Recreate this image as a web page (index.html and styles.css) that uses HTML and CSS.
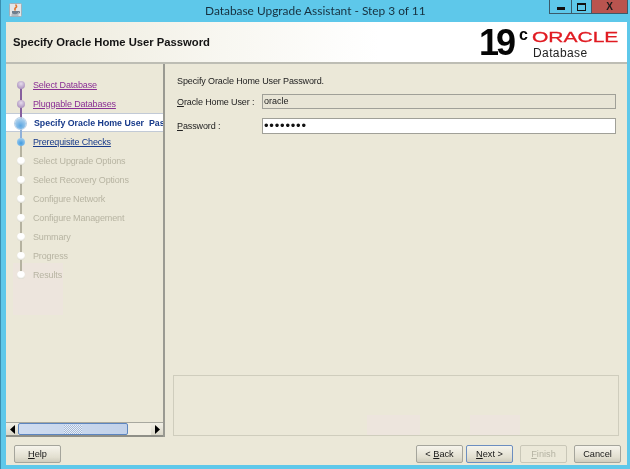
FILE: index.html
```html
<!DOCTYPE html>
<html lang="en">
<head>
<meta charset="utf-8">
<title>Database Upgrade Assistant</title>
<link rel="stylesheet" href="styles.css">
</head>
<body>
<div class="window">
  <div class="titlebar">
    <svg class="app-icon" width="13" height="14" viewBox="0 0 13 14">
      <rect x="0.5" y="0.5" width="12" height="13" rx="1" fill="#e4e6e8" stroke="#9fb0ba"/>
      <path d="M3 8h6v2.5q-3 1.5-6 0z" fill="#6f7f8e"/>
      <path d="M9 8.5h1.5v1.5H9" fill="none" stroke="#6f7f8e"/>
      <path d="M6.5 1.5q2 2 .3 3.2t-.3 2.8" fill="none" stroke="#e0762f" stroke-width="1.6"/>
      <path d="M2.5 12h7" stroke="#7f8f9e"/>
    </svg>
    <div class="title">Database Upgrade Assistant - Step 3 of 11</div>
    <div class="win-controls">
      <div class="win-btn"><span class="glyph-min"></span></div>
      <div class="win-btn"><span class="glyph-max"></span></div>
      <div class="win-btn win-close">X</div>
    </div>
  </div>
  <div class="content">
    <header class="header">
      <h1 class="heading">Specify Oracle Home User Password</h1>
      <div class="logo">
        <div class="version">19<sup>c</sup></div>
        <div class="brand">
          <div class="oracle"><span>ORACLE</span></div>
          <div class="database">Database</div>
        </div>
      </div>
    </header>
    <div class="main">
      <aside class="sidebar">
        <nav class="steps">
          <div class="step visited"><span class="dot"></span><a>Select Database</a></div>
          <div class="step visited"><span class="dot"></span><a>Pluggable Databases</a></div>
          <div class="step current"><span class="dot"></span><b>Specify Oracle Home User&nbsp; Pas</b></div>
          <div class="step next"><span class="dot"></span><a>Prerequisite Checks</a></div>
          <div class="step off"><span class="dot"></span><span>Select Upgrade Options</span></div>
          <div class="step off"><span class="dot"></span><span>Select Recovery Options</span></div>
          <div class="step off"><span class="dot"></span><span>Configure Network</span></div>
          <div class="step off"><span class="dot"></span><span>Configure Management</span></div>
          <div class="step off"><span class="dot"></span><span>Summary</span></div>
          <div class="step off"><span class="dot"></span><span>Progress</span></div>
          <div class="step off last"><span class="dot"></span><span>Results</span></div>
        </nav>
        <div class="hscroll">
          <div class="arrow"><svg width="5" height="9" viewBox="0 0 5 9"><path d="M5 0v9L0 4.5z"/></svg></div>
          <div class="thumb"><span class="grip"></span></div>
          <div class="track"></div>
          <div class="arrow"><svg width="5" height="9" viewBox="0 0 5 9"><path d="M0 0v9l5-4.5z"/></svg></div>
        </div>
      </aside>
      <section class="panel">
        <p class="intro">Specify Oracle Home User Password.</p>
        <div class="form">
          <label class="label"><u>O</u>racle Home User :</label>
          <div class="field readonly">oracle</div>
          <label class="label"><u>P</u>assword :</label>
          <div class="field password">••••••••</div>
        </div>
        <div class="messages"></div>
      </section>
    </div>
    <footer class="footer">
      <button class="btn"><u>H</u>elp</button>
      <div class="nav-btns">
        <div class="pair">
          <button class="btn">&lt; <u>B</u>ack</button>
          <button class="btn focus"><u>N</u>ext &gt;</button>
        </div>
        <button class="btn disabled"><u>F</u>inish</button>
        <button class="btn">Cancel</button>
      </div>
    </footer>
  </div>
</div>
</body>
</html>
```
FILE: styles.css
```css
* { box-sizing: border-box; }
html, body { margin: 0; padding: 0; }
body { width: 630px; height: 469px; overflow: hidden; font-family: "Liberation Sans", Arial, sans-serif; font-size: 9px; color: #222; }
.window { width: 630px; height: 469px; background: #5ec8ea; padding: 0 3px 4px 5px; display: flex; flex-direction: column; border-left: 1px solid #3b8fb0; filter: blur(0.25px); }
.titlebar { height: 22px; flex: none; display: flex; align-items: flex-start; position: relative; }
.app-icon { margin: 3px 0 0 3px; }
.title { position: absolute; left: 199px; top: 2px; font-family: "Lato", sans-serif; font-size: 11.9px; line-height: 17px; color: #16303e; white-space: nowrap; }
.win-controls { margin-left: auto; margin-right: -1px; display: flex; height: 14px; border: 1px solid #3a5a6a; border-top: 0; }
.win-btn { width: 22px; display: flex; align-items: center; justify-content: center; border-right: 1px solid #3a5a6a; }
.win-btn:nth-child(2) { width: 20px; }
.win-close { width: 35px; background: #b9544f; border-right: 0; font-weight: 700; font-size: 10px; color: #1a1a1a; }
.glyph-min { width: 8px; height: 3px; background: #111; margin-top: 4px; }
.glyph-max { width: 9px; height: 8px; border: 2px solid #111; border-width: 2px 1px 1px; }
.content { flex: 1; min-height: 0; background: #ebe8d8; display: flex; flex-direction: column; }
.header { height: 42px; flex: none; display: flex; align-items: center; justify-content: space-between; background: linear-gradient(90deg, #ece9da 0%, #f8f7f1 35%, #fff 60%); border-bottom: 2px solid #bdbdb4; padding: 0 0 0 7px; }
.heading { margin: 0; font-size: 11.25px; font-weight: 700; color: #141414; }
.logo { display: flex; align-items: flex-start; margin-right: 9px; height: 40px; }
.version { font-size: 36px; font-weight: 700; color: #050505; line-height: 40px; letter-spacing: -3px; margin-top: 1px; }
.version sup { font-size: 16px; line-height: 0; vertical-align: 15px; letter-spacing: 0; margin-left: 6px; font-weight: 700; }
.brand { margin-left: 4px; width: 86px; }
.oracle { color: #e01b22; height: 15px; margin-top: 8px; line-height: 15px; font-size: 14px; }
.oracle span { display: inline-block; transform: scaleX(1.5); transform-origin: left center; -webkit-text-stroke: 0.3px #e01b22; }
.database { font-size: 12px; color: #222; line-height: 13px; margin: 2px 0 0 1px; letter-spacing: 0.4px; }
.main { flex: 1; min-height: 0; display: flex; }
.sidebar { width: 159px; flex: none; display: flex; flex-direction: column; border-right: 2px solid #9a9a92; }
.steps { flex: 1; padding-top: 11px; overflow: hidden; background: linear-gradient(#ede5dd, #ede5dd) 7px 199px / 50px 52px no-repeat; }
.step { position: relative; height: 19px; display: flex; align-items: center; padding-left: 27px; white-space: nowrap; font-size: 9px; letter-spacing: -0.14px; line-height: 12px; }
.step .dot { position: absolute; left: 11px; top: 6px; width: 8px; height: 8px; border-radius: 50%; z-index: 2; }
.step::after { content: ""; position: absolute; left: 14px; top: 10px; width: 2px; height: 19px; background: #b5b2a0; z-index: 1; }
.step.last::after { display: none; }
.visited a { color: #8a2f94; text-decoration: underline; }
.visited .dot { background: radial-gradient(circle at 50% 35%, #e6dcec, #9a7cb0); }
.visited::after { background: #87609e; }
.current { background: #fff; border-top: 1px solid #c2cad6; border-bottom: 1px solid #c2cad6; padding-left: 28px; }
.current b { color: #173a8a; font-weight: 700; font-size: 8.8px; letter-spacing: 0; }
.current .dot { left: 9px; top: 3.5px; width: 11px; height: 11px; background: radial-gradient(circle at 50% 70%, #5aa6e2, #cfe2f2); box-shadow: 0 0 0 1px #b8cfe6; }
.current::after { background: #8fb0d8; top: 9px; }
.next a { color: #173a8a; text-decoration: underline; }
.next .dot { background: radial-gradient(circle at 50% 65%, #3f9ae0, #bcdcf2); }
.off { color: #b7b4a2; }
.off .dot { background: radial-gradient(circle at 50% 35%, #fff 50%, #bfbdac); }
.hscroll { height: 15px; flex: none; display: flex; border-top: 1px solid #a8a89f; border-bottom: 2px solid #8f8f87; }
.arrow { width: 12px; flex: none; display: flex; align-items: center; justify-content: center; background: linear-gradient(#f2f0e6, #dad7c8); }
.thumb { width: 110px; flex: none; display: flex; align-items: center; justify-content: center; border: 1px solid #5d86c0; border-radius: 2px; background: linear-gradient(90deg, #cfdcf0, #c2d2ea); }
.grip { width: 18px; height: 9px; background: repeating-conic-gradient(#e8eef8 0 25%, #a5bad8 0 50%) 0 0 / 2px 2px; }
.track { flex: 1; background: #f1eee2; }
.panel { flex: 1; min-width: 0; display: flex; flex-direction: column; padding: 11px 8px 1px 8px; }
.intro { margin: 0 0 0 4px; line-height: 12px; font-size: 9px; letter-spacing: -0.12px; }
.form { display: grid; grid-template-columns: 85px 1fr; row-gap: 9px; align-items: center; margin: 7px 3px 0 4px; }
.label { font-size: 9px; letter-spacing: -0.12px; }
.field { height: 15px; border: 1.5px solid #a0a098; line-height: 12px; padding-left: 1px; font-size: 9px; }
.readonly { background: #e8e5d6; color: #222; }
.password { background: #fff; color: #111; font-size: 13px; letter-spacing: 0.8px; height: 16px; line-height: 13px; }
.messages { margin-top: auto; height: 61px; border: 1px solid #cfcdbd; background: linear-gradient(#ede5dd, #ede5dd) 193px 39px / 53px 21px no-repeat, linear-gradient(#ede5dd, #ede5dd) 296px 39px / 50px 21px no-repeat, #ebe8d8; }
.footer { height: 28px; flex: none; display: flex; justify-content: space-between; padding: 8px 6px 0 8px; }
.nav-btns { display: flex; gap: 7px; }
.pair { display: flex; gap: 3px; }
.btn { width: 47px; height: 18px; padding: 0; font: 9.2px "Liberation Sans", Arial, sans-serif; color: #181818; border: 1px solid #a5a59c; border-radius: 2px; background: linear-gradient(#f6f4ec, #e2dfd0 70%, #cfccbc); }
.focus { border: 1.5px solid #6c8ec0; }
.disabled { color: #b5b3a3; background: #ebe8d8; border-color: #c9c7b8; }
```
